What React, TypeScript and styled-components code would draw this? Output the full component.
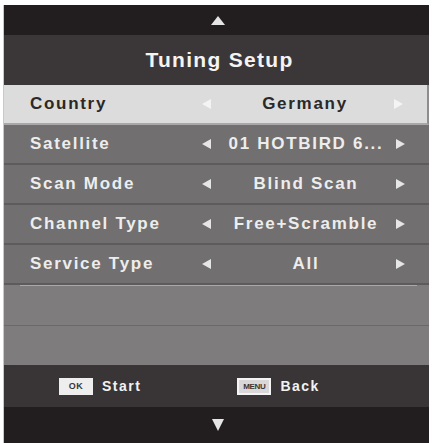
import React from "react";
import styled, { createGlobalStyle } from "styled-components";

const GlobalStyle = createGlobalStyle`
  html, body { margin: 0; padding: 0; background: #ffffff; }
  body { font-family: "Liberation Sans", Arial, sans-serif; }
`;

const Screen = styled.div`
  width: 425px;
  margin: 5px 0 0 4px;
  display: flex;
  flex-direction: column;
  box-shadow: -1px 0 0 #c9c7c7;
`;

const NavBar = styled.div<{ $h: number }>`
  height: ${(p) => p.$h}px;
  background: #221e1f;
  display: flex;
  align-items: center;
  justify-content: center;
  padding-left: 2px;
  box-sizing: border-box;
`;

const TitleBar = styled.div`
  height: 50px;
  background: #3b3738;
  display: flex;
  align-items: center;
  justify-content: center;
  color: #f4f4f4;
  font-weight: bold;
  font-size: 21px;
  letter-spacing: 1.3px;
  padding-left: 6px;
  box-sizing: border-box;
`;

const Row = styled.div<{ $selected?: boolean }>`
  height: 40px;
  box-sizing: border-box;
  display: grid;
  grid-template-columns: 172px 12px 1fr 12px;
  align-items: center;
  padding: 0 21px 0 26px;
  background: ${(p) => (p.$selected ? "#dcdcdc" : "#716f6f")};
  color: ${(p) => (p.$selected ? "#2a2828" : "#ededed")};
  border-bottom: 2px solid ${(p) => (p.$selected ? "#a9a7a7" : "#5d5b5b")};
  border-right: ${(p) => (p.$selected ? "2px solid #8e8c8c" : "0")};
  font-weight: bold;
  font-size: 17px;
  letter-spacing: 1.7px;
  white-space: nowrap;
`;

const Label = styled.span``;

const Value = styled.span`
  text-align: center;
  padding-left: 2px;
`;

const Arrow = styled.span`
  display: flex;
  align-items: center;
`;

const EmptyRow = styled.div<{ $first?: boolean }>`
  height: 40px;
  box-sizing: border-box;
  background: #7e7c7c;
  border-top: ${(p) => (p.$first ? "0" : "1px solid #6a6868")};
`;

const Divider = styled.div`
  height: 1px;
  margin: 0 12px 0 16px;
  background: #aaa8a8;
`;

const Footer = styled.div`
  height: 42px;
  background: #393536;
  display: flex;
  align-items: center;
  padding-left: 55px;
  gap: 96px;
  color: #f2f2f2;
  font-weight: bold;
  font-size: 14px;
  letter-spacing: 1.5px;
`;

const Hint = styled.div`
  display: flex;
  align-items: center;
  gap: 9px;
`;

const KeyBadge = styled.span<{ $menu?: boolean }>`
  width: 34px;
  height: 17px;
  box-sizing: border-box;
  display: flex;
  align-items: center;
  justify-content: center;
  background: ${(p) => (p.$menu ? "#d9d7d7" : "#eeeeee")};
  border: ${(p) => (p.$menu ? "2px solid #f4f4f4" : "0")};
  color: #3a3637;
  font-size: ${(p) => (p.$menu ? "8px" : "9px")};
  letter-spacing: ${(p) => (p.$menu ? "-0.3px" : "0.5px")};
  font-weight: bold;
`;

const Tri = ({ dir, color = "#eeeeee", w = 9, h = 10 }: { dir: "up" | "down" | "left" | "right"; color?: string; w?: number; h?: number }) => {
  const pts: Record<string, string> = {
    up: `0,${h} ${w / 2},0 ${w},${h}`,
    down: `0,0 ${w},0 ${w / 2},${h}`,
    left: `${w},0 ${w},${h} 0,${h / 2}`,
    right: `0,0 0,${h} ${w},${h / 2}`,
  };
  return (
    <svg width={w} height={h} viewBox={`0 0 ${w} ${h}`}>
      <polygon points={pts[dir]} fill={color} />
    </svg>
  );
};

const rows = [
  { label: "Country", value: "Germany", selected: true },
  { label: "Satellite", value: "01 HOTBIRD 6..." },
  { label: "Scan Mode", value: "Blind Scan" },
  { label: "Channel Type", value: "Free+Scramble" },
  { label: "Service Type", value: "All" },
];

export default function App() {
  return (
    <>
      <GlobalStyle />
      <Screen>
        <NavBar $h={30}>
          <Tri dir="up" w={14} h={9} color="#e6e6e6" />
        </NavBar>
        <TitleBar>Tuning Setup</TitleBar>
        {rows.map((r) => (
          <Row key={r.label} $selected={r.selected}>
            <Label>{r.label}</Label>
            <Arrow>
              <Tri dir="left" w={9} h={10} color={r.selected ? "#f4f4f4" : "#e6e6e6"} />
            </Arrow>
            <Value>{r.value}</Value>
            <Arrow>
              <Tri dir="right" w={9} h={10} color={r.selected ? "#f4f4f4" : "#e6e6e6"} />
            </Arrow>
          </Row>
        ))}
        <EmptyRow $first>
          <Divider />
        </EmptyRow>
        <EmptyRow />
        <Footer>
          <Hint>
            <KeyBadge>OK</KeyBadge>
            Start
          </Hint>
          <Hint>
            <KeyBadge $menu>MENU</KeyBadge>
            Back
          </Hint>
        </Footer>
        <NavBar $h={36}>
          <Tri dir="down" w={12} h={12} color="#e6e6e6" />
        </NavBar>
      </Screen>
    </>
  );
}
